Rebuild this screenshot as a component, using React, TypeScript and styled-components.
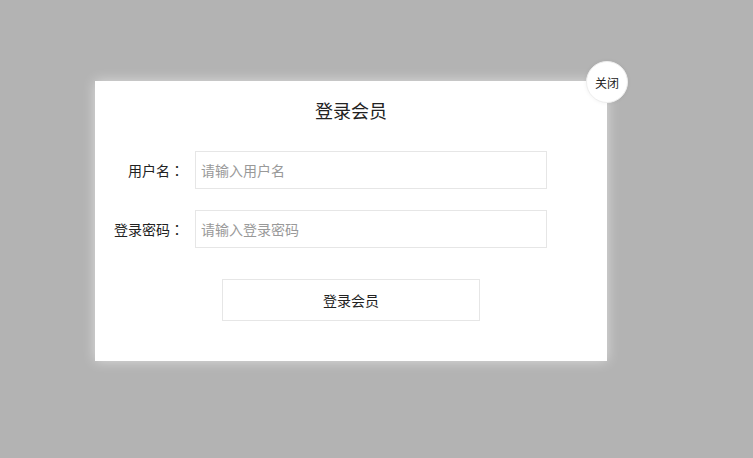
import React from 'react';
import styled, { createGlobalStyle } from 'styled-components';

const GlobalStyle = createGlobalStyle`
  html, body {
    margin: 0;
    padding: 0;
    background: #b3b3b3;
  }
  body {
    font-family: "Noto Sans CJK SC", "Noto Sans", sans-serif;
    color: #333;
  }
`;

const Page = styled.div`
  width: 753px;
  height: 458px;
  box-sizing: border-box;
  padding: 81px 0 0 95px;
  background: #b3b3b3;
`;

const Modal = styled.div`
  position: relative;
  width: 512px;
  height: 280px;
  box-sizing: border-box;
  padding: 17px 0 0;
  background: #fff;
  box-shadow: 0 0 12px rgba(255, 255, 255, 0.55);
  display: flex;
  flex-direction: column;
  align-items: center;
`;

const Close = styled.button`
  position: absolute;
  top: -20px;
  right: -21px;
  width: 42px;
  height: 42px;
  border-radius: 50%;
  border: 1px solid #eee;
  background: #fff;
  box-shadow: 0 0 4px rgba(0, 0, 0, 0.06);
  font-family: inherit;
  font-size: 12px;
  color: #222;
  padding: 0;
  cursor: pointer;
`;

const Title = styled.h2`
  margin: 0;
  font-size: 18px;
  font-weight: normal;
  line-height: 24px;
  color: #222;
`;

const Form = styled.form`
  align-self: stretch;
  display: flex;
  flex-direction: column;
  margin-top: 29px;
`;

const Row = styled.div<{ $gap?: number }>`
  display: flex;
  align-items: center;
  margin-top: ${p => p.$gap ?? 0}px;
`;

const Label = styled.label`
  width: 89px;
  flex: none;
  text-align: right;
  font-size: 14px;
  color: #222;
  margin-right: 11px;
`;

// 全角冒号居中
const Colon = styled.span`
  font-family: "Noto Sans CJK TC", sans-serif;
`;

const Input = styled.input`
  width: 352px;
  height: 38px;
  box-sizing: border-box;
  border: 1px solid #e6e6e6;
  padding: 0 5px;
  font-family: inherit;
  font-size: 14px;
  color: #333;
  outline: none;
  &::placeholder {
    color: #999;
  }
`;

const Submit = styled.button`
  align-self: center;
  width: 258px;
  height: 42px;
  margin-top: 31px;
  border: 1px solid #e6e6e6;
  background: #fff;
  font-family: inherit;
  font-size: 14px;
  color: #222;
  cursor: pointer;
`;

export default function App() {
  return (
    <Page>
      <GlobalStyle />
      <Modal>
        <Close type="button">关闭</Close>
        <Title>登录会员</Title>
        <Form onSubmit={e => e.preventDefault()}>
          <Row>
            <Label>用户名<Colon>：</Colon></Label>
            <Input placeholder="请输入用户名" />
          </Row>
          <Row $gap={21}>
            <Label>登录密码<Colon>：</Colon></Label>
            <Input type="password" placeholder="请输入登录密码" />
          </Row>
          <Submit type="submit">登录会员</Submit>
        </Form>
      </Modal>
    </Page>
  );
}
